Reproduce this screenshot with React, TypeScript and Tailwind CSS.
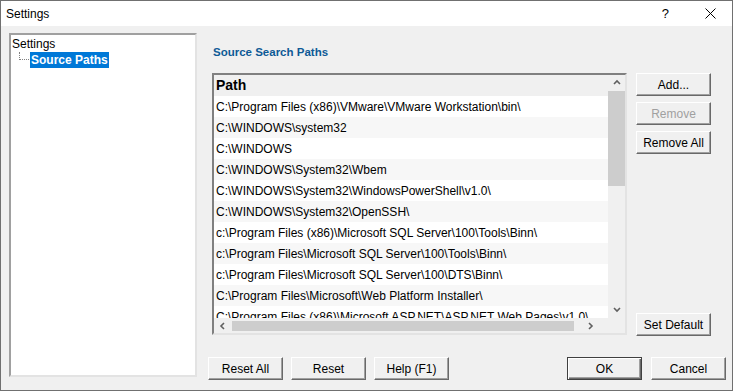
import React from "react";

const rows = [
  "C:\\Program Files (x86)\\VMware\\VMware Workstation\\bin\\",
  "C:\\WINDOWS\\system32",
  "C:\\WINDOWS",
  "C:\\WINDOWS\\System32\\Wbem",
  "C:\\WINDOWS\\System32\\WindowsPowerShell\\v1.0\\",
  "C:\\WINDOWS\\System32\\OpenSSH\\",
  "c:\\Program Files (x86)\\Microsoft SQL Server\\100\\Tools\\Binn\\",
  "c:\\Program Files\\Microsoft SQL Server\\100\\Tools\\Binn\\",
  "c:\\Program Files\\Microsoft SQL Server\\100\\DTS\\Binn\\",
  "C:\\Program Files\\Microsoft\\Web Platform Installer\\",
  "C:\\Program Files (x86)\\Microsoft ASP.NET\\ASP.NET Web Pages\\v1.0\\",
];

function Btn({
  label,
  disabled,
  isDefault,
}: {
  label: string;
  disabled?: boolean;
  isDefault?: boolean;
}) {
  return (
    <div
      className={
        "w-[75px] h-[23px] flex items-center justify-center text-[12px] bg-[#f0f0f0] border " +
        (isDefault
          ? "border-[#404040] shadow-[inset_1px_1px_0_#fff,inset_-1px_-1px_0_#696969,inset_-2px_-2px_0_#a0a0a0] "
          : "border-t-white border-l-white border-r-[#696969] border-b-[#696969] shadow-[inset_-1px_-1px_0_#a0a0a0] ") +
        (disabled ? "text-[#a0a0a0]" : "text-black")
      }
    >
      {label}
    </div>
  );
}

function Chevron({ dir }: { dir: "up" | "down" | "left" | "right" }) {
  const pts = {
    up: "1,5 4,2 7,5",
    down: "1,2 4,5 7,2",
    left: "5,1 2,4 5,7",
    right: "2,1 5,4 2,7",
  }[dir];
  return (
    <svg width="8" height="8" viewBox="0 0 8 8">
      <polyline points={pts} fill="none" stroke="#606060" strokeWidth="1.6" />
    </svg>
  );
}

export default function App() {
  return (
    <div
      className="w-[733px] h-[391px] border border-[#707070] bg-[#f0f0f0] flex flex-col overflow-hidden text-black"
      style={{ fontFamily: '"Liberation Sans", Arial, sans-serif' }}
    >
      {/* Title bar */}
      <div className="h-[25px] bg-white flex items-center shrink-0">
        <span className="ml-[5px] text-[12px]">Settings</span>
        <div className="ml-auto flex items-center">
          <span className="text-[13px] mr-[36px]">?</span>
          <svg width="11" height="11" viewBox="0 0 11 11" className="mr-[16px]">
            <path d="M0.5 0.5 L10.5 10.5 M10.5 0.5 L0.5 10.5" stroke="#000" strokeWidth="1" />
          </svg>
        </div>
      </div>

      {/* Body */}
      <div className="flex pl-[8px] pt-[7px]">
        {/* Tree */}
        <div className="w-[188px] h-[344px] bg-white border-2 border-t-[#a0a0a0] border-l-[#a0a0a0] border-r-[#e3e3e3] border-b-[#e3e3e3] shrink-0 relative">
          <div className="absolute left-[1px] top-[2px] text-[12px] leading-[14px]">Settings</div>
          <div className="absolute left-[8px] top-[17px] w-[1px] h-[8px] border-l border-dotted border-[#808080]" />
          <div className="absolute left-[8px] top-[24px] w-[10px] h-[1px] border-t border-dotted border-[#808080]" />
          <div className="absolute left-[19px] top-[17px] h-[16px] px-[1px] bg-[#0078d7] text-white font-bold text-[12px] leading-[16px]">
            Source Paths
          </div>
        </div>

        {/* Right */}
        <div className="ml-[11px] w-[518px] flex flex-col">
          <div className="pl-[5px] pt-[11px] h-[40px] text-[11.5px] font-bold text-[#0e5a96]">
            Source Search Paths
          </div>
          <div className="flex">
            {/* List */}
            <div className="ml-[4px] w-[415px] h-[262px] border-2 border-t-[#808080] border-l-[#808080] border-r-[#e3e3e3] border-b-[#e3e3e3] bg-white flex flex-col">
              <div className="flex h-[243px]">
                <div className="w-[394px] overflow-hidden flex flex-col">
                  <div className="h-[21px] bg-[#f0f0f0] shrink-0 flex items-center pl-[2px] text-[14px] font-bold">
                    Path
                  </div>
                  {rows.map((r, i) => (
                    <div
                      key={i}
                      className={
                        "h-[21px] shrink-0 flex items-center pl-[2px] text-[12px] whitespace-nowrap " +
                        (i % 2 === 0 ? "bg-white" : "bg-[#f7f7f7]")
                      }
                    >
                      {r}
                    </div>
                  ))}
                </div>
                {/* vertical scrollbar */}
                <div className="w-[17px] bg-[#f0f0f0] flex flex-col items-center">
                  <div className="h-[16px] flex items-center justify-center">
                    <Chevron dir="up" />
                  </div>
                  <div className="w-[17px] h-[95px] bg-[#cdcdcd]" />
                  <div className="flex-1" />
                  <div className="h-[16px] flex items-center justify-center">
                    <Chevron dir="down" />
                  </div>
                </div>
              </div>
              {/* horizontal scrollbar */}
              <div className="flex h-[17px]">
                <div className="w-[394px] bg-[#f0f0f0] flex items-center">
                  <div className="w-[17px] flex justify-center">
                    <Chevron dir="left" />
                  </div>
                  <div className="w-[342px] h-[10px] bg-[#cdcdcd] ml-[1px]" />
                  <div className="flex-1 flex justify-center">
                    <Chevron dir="right" />
                  </div>
                </div>
                <div className="w-[17px] bg-[#f0f0f0]" />
              </div>
            </div>

            {/* Side buttons */}
            <div className="ml-[9px] flex flex-col">
              <Btn label="Add..." />
              <div className="h-[6px]" />
              <Btn label="Remove" disabled />
              <div className="h-[6px]" />
              <Btn label="Remove All" />
              <div className="flex-1" />
              <div className="mb-[-1px]">
                <Btn label="Set Default" />
              </div>
            </div>
          </div>

          {/* Bottom buttons */}
          <div className="flex mt-[22px]">
            <Btn label="Reset All" />
            <div className="w-[8px]" />
            <Btn label="Reset" />
            <div className="w-[8px]" />
            <Btn label="Help (F1)" />
            <div className="flex-1" />
            <Btn label="OK" isDefault />
            <div className="w-[9px]" />
            <Btn label="Cancel" />
          </div>
        </div>
      </div>
    </div>
  );
}
